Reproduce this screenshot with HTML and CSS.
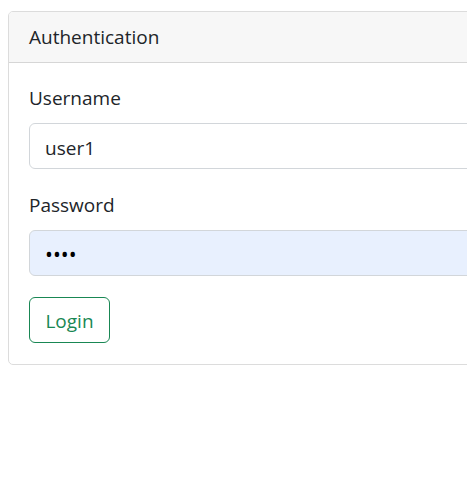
FILE: index.html
```html
<!DOCTYPE html>
<html>
<head>
<meta charset="utf-8">
<link rel="stylesheet" href="styles.css">
</head>
<body>
<div class="card">
  <div class="card-header">Authentication</div>
  <div class="card-body">
    <div class="group">
      <label class="label" for="u">Username</label>
      <input class="input" id="u" type="text" value="user1">
    </div>
    <div class="group">
      <label class="label" for="p">Password</label>
      <input class="input autofill" id="p" type="password" value="abcd">
    </div>
    <button class="btn">Login</button>
  </div>
</div>
</body>
</html>
```
FILE: styles.css
```css
html { overflow: hidden; }
body {
  margin: 0;
  padding: 11px 0 0 8px;
  font-family: "Open Sans", "Noto Sans", sans-serif;
  font-size: 19px;
  color: #212529;
  background: #fff;
}
.card {
  width: 560px;
  border: 1px solid #dcdcdc;
  border-radius: 5px;
  overflow: hidden;
}
.card-header {
  height: 50px;
  line-height: 50px;
  padding: 0 20px;
  background: #f7f7f7;
  border-bottom: 1px solid #d6d6d6;
}
.card-body {
  padding: 18px 20px 21px;
  display: flex;
  flex-direction: column;
  align-items: flex-start;
}
.group {
  display: flex;
  flex-direction: column;
  align-self: stretch;
  margin-bottom: 19px;
}
.group + .btn { margin-top: 2px; }
.label {
  line-height: 29px;
  padding-top: 3px;
  margin-bottom: 10px;
}
.input {
  box-sizing: border-box;
  height: 46px;
  border: 1px solid #d2d6da;
  border-radius: 6px;
  padding: 3px 15px 0;
  font-family: inherit;
  font-size: 19px;
  color: #212529;
  background: #fff;
  outline: none;
}
.autofill {
  background: #e8f0fe;
  color: #000;
  font-size: 21px;
  padding-top: 2px;
}
.btn {
  box-sizing: border-box;
  height: 46px;
  width: 81px;
  border: 1px solid #198754;
  border-radius: 6px;
  background: #fff;
  color: #198754;
  font-family: inherit;
  font-size: 19px;
  padding: 2px 0 0;
}
```
